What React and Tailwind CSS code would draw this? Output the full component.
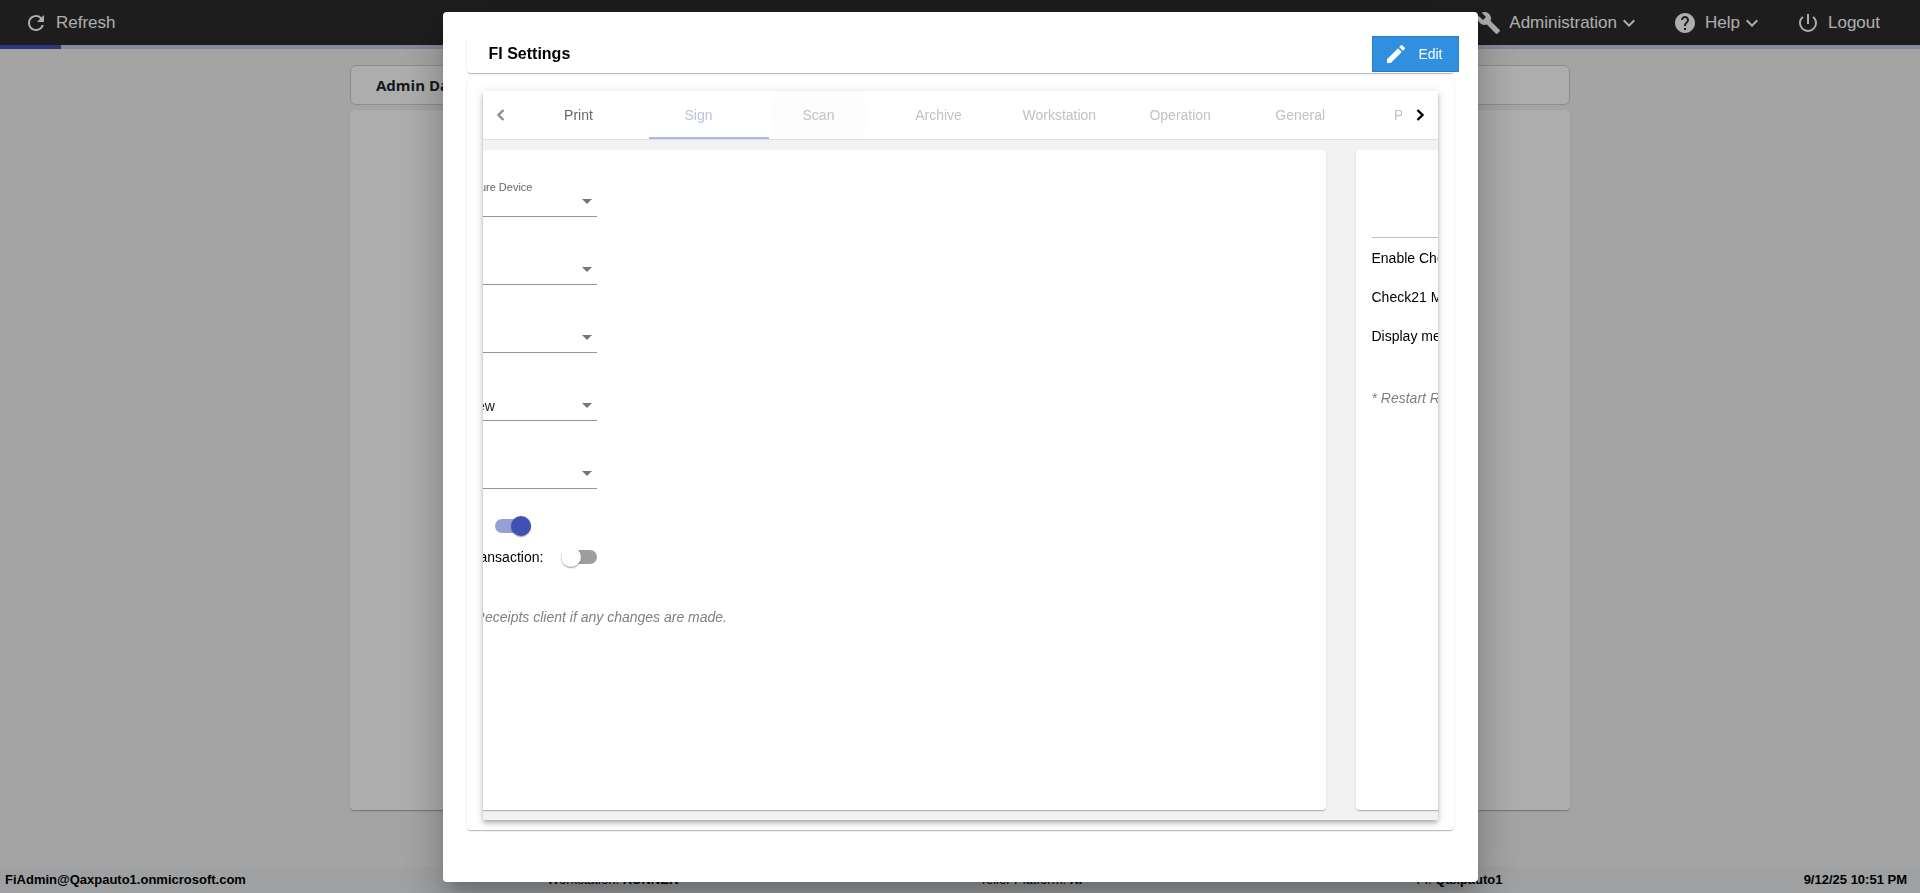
import { useId, useState } from 'react';
import { MdBuild, MdEdit, MdExpandMore, MdHelp, MdPowerSettingsNew, MdRefresh } from 'react-icons/md';
import clsx from 'clsx';

const TABS = ['Print', 'Sign', 'Scan', 'Archive', 'Workstation', 'Operation', 'General', 'Platform'];

const CARD = 'shadow-[0_2px_1px_-1px_rgba(0,0,0,0.16),0_1px_1px_0_rgba(0,0,0,0.1),0_1px_3px_0_rgba(0,0,0,0.08)]';

function Chevron({ flip, className }) {
  return (
    <svg width="8" height="12" viewBox="0 0 8 12" className={className} aria-hidden="true">
      <path
        d={flip ? 'M1.5 1 L6.5 6 L1.5 11' : 'M6.5 1 L1.5 6 L6.5 11'}
        fill="none"
        stroke="currentColor"
        strokeWidth="2.4"
      />
    </svg>
  );
}

function TopBar() {
  return (
    <header className="flex h-[45px] shrink-0 items-center bg-[#2c2c2c] pr-10 pl-6 text-[17px] text-white">
      <button className="flex items-center gap-2">
        <MdRefresh size={24} />
        Refresh
      </button>
      <nav className="ml-auto flex items-center gap-8">
        <button className="flex items-center">
          <MdBuild size={24} className="mr-2" />
          Administration
          <MdExpandMore size={24} />
        </button>
        <button className="flex items-center">
          <MdHelp size={24} className="mr-2" />
          Help
          <MdExpandMore size={24} />
        </button>
        <button className="flex items-center">
          <MdPowerSettingsNew size={24} className="mr-2" />
          Logout
        </button>
      </nav>
    </header>
  );
}

function StatusBar() {
  return (
    <footer className="flex h-[26px] shrink-0 items-center justify-between bg-[#e9ecee] pr-[13px] pl-[5px] text-[13px] text-black">
      <b>FiAdmin@Qaxpauto1.onmicrosoft.com</b>
      <span>Workstation: <b>RUNNER</b></span>
      <span className="w-[136px]">Teller Platform: <b>XP</b></span>
      <span>FI: <b>Qaxpauto1</b></span>
      <b>9/12/25 10:51 PM</b>
    </footer>
  );
}

function SelectField({ label, value = '' }) {
  const id = useId();
  return (
    <div className="w-[180px] border-b border-[#949494] pt-[13px] pb-[7px]">
      <label htmlFor={id} className="flex h-[15px] w-[116px] justify-end text-[11px] leading-4 whitespace-nowrap text-[#666]">
        {label}
      </label>
      <div className="flex h-[15px] items-center pr-[5px]">
        <select id={id} defaultValue={value} className="h-4 min-w-0 flex-1 appearance-none bg-transparent text-sm leading-4 text-[#212121]">
          <option value={value}>{value}</option>
        </select>
        <svg width="10" height="5" viewBox="0 0 10 5" className="text-[#757575]" aria-hidden="true">
          <path d="M0 0h10L5 5z" fill="currentColor" />
        </svg>
      </div>
    </div>
  );
}

function Toggle({ label, defaultChecked }) {
  return (
    <label className="flex h-[31px] items-center">
      <span className="min-w-[60px] whitespace-nowrap">{label}</span>
      <input
        type="checkbox"
        role="switch"
        defaultChecked={defaultChecked}
        className="relative ml-[18px] h-[14px] w-9 shrink-0 appearance-none rounded-full bg-[#9e9e9e] before:absolute before:-top-[3px] before:left-0 before:size-5 before:rounded-full before:bg-white before:shadow-[0_2px_1px_-1px_rgba(0,0,0,0.2),0_1px_1px_0_rgba(0,0,0,0.14),0_1px_3px_0_rgba(0,0,0,0.12)] checked:bg-[#979fd6] checked:before:left-4 checked:before:bg-[#3f51b5]"
      />
    </label>
  );
}

function Pane({ children }) {
  return (
    <section className="flex w-full shrink-0 px-[15px] py-[10px]">
      <div className={clsx('flex-1 rounded bg-white p-4 text-sm text-black', CARD)}>{children}</div>
    </section>
  );
}

function SignPane() {
  return (
    <Pane>
      <div className="flex flex-col gap-[17px]">
        <SelectField label="Default Signature Device" />
        <SelectField label="" />
        <SelectField label="" />
        <SelectField label="" value="Default View" />
        <SelectField label="" />
      </div>
      <div className="mt-[21px] flex flex-col">
        <Toggle label="Enable:" defaultChecked />
        <Toggle label="One per transaction:" />
      </div>
      <p className="mt-[35px] text-[#808080] italic">* Restart Receipts client if any changes are made.</p>
    </Pane>
  );
}

function ScanPane() {
  return (
    <Pane>
      <div className="h-[72px] w-[180px] border-b border-[#bdbdbd]" />
      <div className="flex flex-col">
        {['Enable Check21:', 'Check21 Mode:', 'Display message:'].map((text) => (
          <p key={text} className="flex h-[39px] items-center">{text}</p>
        ))}
      </div>
      <p className="mt-[33px] text-[#808080] italic">* Restart Receipts client if any changes are made.</p>
    </Pane>
  );
}

function TabBar({ active, onChange }) {
  return (
    <div className="flex h-[49px] shrink-0 border-b border-[#dedede] bg-white">
      <button aria-label="Previous tabs" className="flex w-9 shrink-0 items-center justify-center text-[#8c8c8c]">
        <Chevron />
      </button>
      <div role="tablist" className="relative flex min-w-0 flex-1 overflow-hidden text-sm">
        {TABS.map((tab, i) => (
          <button
            key={tab}
            role="tab"
            aria-selected={i === active}
            onClick={() => onChange(i)}
            className={clsx(
              'relative min-w-[120px] shrink-0 overflow-hidden px-6',
              i === 0 && 'text-[#666]',
              i === active && 'text-[#bcc0de]',
              i !== 0 && i !== active && 'text-[#c2c2c2]'
            )}
          >
            {tab === 'Scan' && <span className="absolute -top-6 left-3 size-24 rounded-full bg-[#fdfdfd]" />}
            <span className="relative">{tab}</span>
          </button>
        ))}
        <span className="absolute bottom-0 left-[130px] h-[2px] w-[120px] bg-[#b0b8e4]" />
      </div>
      <button aria-label="Next tabs" className="flex w-9 shrink-0 items-center justify-center text-black">
        <Chevron flip />
      </button>
    </div>
  );
}

function SettingsDialog() {
  const [active, setActive] = useState(1);

  return (
    <div className="fixed inset-0 flex items-start justify-center bg-black/32 pt-3">
      <div
        role="dialog"
        aria-labelledby="dialog-title"
        className="flex h-[calc(100vh-23px)] w-full max-w-[1035px] flex-col gap-[7px] rounded bg-white px-6 pt-6 pb-[52px] shadow-[0_11px_15px_-7px_rgba(0,0,0,0.2),0_24px_38px_3px_rgba(0,0,0,0.14),0_9px_46px_8px_rgba(0,0,0,0.12)]"
      >
        <div className={clsx('flex h-[37px] shrink-0 items-start justify-between rounded bg-white pl-[22px]', CARD)}>
          <h2 id="dialog-title" className="text-base leading-9 font-bold text-black">FI Settings</h2>
          <button className="-mr-[5px] flex h-9 items-center gap-[10px] border border-[#2a80c8] bg-[#308fdf] pr-[15px] pl-[11px] text-sm text-white">
            <MdEdit size={24} />
            Edit
          </button>
        </div>
        <div className={clsx('flex min-h-0 flex-1 flex-col rounded bg-white px-4 pt-[11px] pb-[10px]', CARD)}>
          <div className="flex min-h-0 flex-1 flex-col shadow-[0_2px_4px_-1px_rgba(0,0,0,0.2),0_4px_5px_0_rgba(0,0,0,0.14),0_1px_10px_0_rgba(0,0,0,0.12)]">
            <TabBar active={active} onChange={setActive} />
            {/* panes are caught part way through the slide */}
            <div className="flex min-h-0 flex-1 overflow-hidden bg-[#f2f2f2]">
              <div className="-ml-[97px] flex w-full shrink-0">
                <SignPane />
                <ScanPane />
              </div>
            </div>
          </div>
        </div>
      </div>
    </div>
  );
}

export default function App() {
  return (
    <div className="flex h-screen flex-col overflow-hidden bg-[#f2f2f2] font-['Liberation_Sans',Arial,sans-serif]">
      <TopBar />
      <div className="h-1 shrink-0 bg-[#c5cae9]">
        <div className="h-full w-[61px] bg-[#3f51b5]" />
      </div>
      <main className="mx-auto flex w-full max-w-[1220px] flex-1 flex-col gap-[5px] pt-4 pb-[57px]">
        <div className="flex h-10 shrink-0 items-center rounded-md border border-[#d0d0d0] bg-white px-[25px]">
          <h1 className="font-['Open_Sans',sans-serif] text-[15px] font-bold text-[#212529]">Admin Dashboard</h1>
        </div>
        <div className={clsx('flex-1 rounded bg-white', CARD)} />
      </main>
      <StatusBar />
      <SettingsDialog />
    </div>
  );
}
